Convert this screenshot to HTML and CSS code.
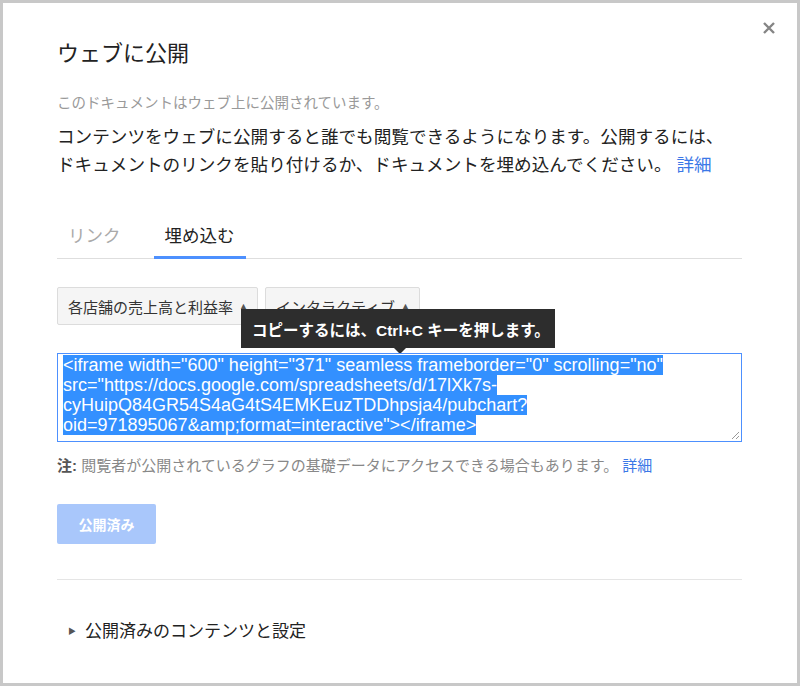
FILE: index.html
```
<!DOCTYPE html>
<html lang="ja">
<head>
    <meta charset="UTF-8">
    <meta name="viewport" content="width=device-width, initial-scale=1.0">
    <title>ウェブに公開</title>
    <link rel="stylesheet" href="styles.css">
</head>
<body>
    <div class="dialog">
        <button class="close" aria-label="閉じる">
            <svg width="14" height="14" viewBox="0 0 14 14">
                <path d="M2 2L12 12M12 2L2 12" stroke="#858585" stroke-width="2.4" fill="none"/>
            </svg>
        </button>

        <h1 class="title">ウェブに公開</h1>
        <p class="status">このドキュメントはウェブ上に公開されています。</p>
        <p class="intro">
            コンテンツをウェブに公開すると誰でも閲覧できるようになります。公開するには、<br>
            ドキュメントのリンクを貼り付けるか、ドキュメントを埋め込んでください。 <a href="#">詳細</a>
        </p>

        <div class="tabs">
            <div class="tab">リンク</div>
            <div class="tab active">埋め込む</div>
        </div>

        <div class="selects">
            <div class="select select-chart">各店舗の売上高と利益率 <span class="arrow">▲</span></div>
            <div class="select select-mode">インタラクティブ <span class="arrow">▲</span></div>
            <div class="tooltip">コピーするには、Ctrl+C キーを押します。</div>
        </div>

        <div class="code">
            <span class="selected">&lt;iframe width="600" height="371" seamless frameborder="0" scrolling="no" <br>src="https://docs.google.com/spreadsheets/d/17lXk7s-<br>cyHuipQ84GR54S4aG4tS4EMKEuzTDDhpsja4/pubchart?<br>oid=971895067&amp;amp;format=interactive"&gt;&lt;/iframe&gt;</span>
            <svg class="grip" width="9" height="9" viewBox="0 0 9 9">
                <path d="M8 1L1 8M8 5L5 8" stroke="#999" stroke-width="1" fill="none"/>
            </svg>
        </div>

        <p class="note"><b>注:</b> 閲覧者が公開されているグラフの基礎データにアクセスできる場合もあります。 <a href="#">詳細</a></p>

        <button class="publish" disabled>公開済み</button>

        <div class="divider"></div>

        <div class="expander"><span class="caret">▶</span>公開済みのコンテンツと設定</div>
    </div>
</body>
</html>
```

FILE: styles.css
```
body {
    margin: 0;
    padding: 0;
    background: #fff;
    font-family: 'Liberation Sans', 'Noto Sans CJK JP', sans-serif;
    color: #222;
}

.dialog {
    position: relative;
    width: 800px;
    height: 686px;
    box-sizing: border-box;
    border: 3px solid #c8c8c8;
    background: #fff;
    padding: 36px 55px 0 54px;
}

.close {
    position: absolute;
    top: 18px;
    right: 21px;
    padding: 0;
    border: none;
    background: none;
    cursor: pointer;
}

.title {
    margin: 0;
    font-size: 22px;
    font-weight: normal;
    line-height: 30px;
    color: #222;
}

.status {
    margin: 24px 0 0;
    font-size: 14.5px;
    line-height: 20px;
    color: #999;
}

.intro {
    margin: 10px 0 0;
    font-size: 17.6px;
    line-height: 28px;
    color: #222;
    white-space: nowrap;
}

a {
    color: #3b78e7;
    text-decoration: none;
}

.tabs {
    display: flex;
    gap: 22px;
    margin-top: 35px;
    border-bottom: 1px solid #dedede;
}

.tab {
    padding: 10px 11px 8px;
    font-size: 17.5px;
    line-height: 24px;
    color: #aaa;
    border-bottom: 3px solid transparent;
    margin-bottom: -1px;
}

.tab.active {
    color: #222;
    border-bottom-color: #4d90fe;
}

.selects {
    position: relative;
    display: flex;
    gap: 7px;
    margin-top: 28px;
}

.select {
    height: 38px;
    box-sizing: border-box;
    padding: 0 9px 0 10px;
    display: flex;
    align-items: center;
    justify-content: space-between;
    background: #f5f5f5;
    border: 1px solid #dcdcdc;
    border-radius: 2px;
    font-size: 15px;
    color: #333;
    white-space: nowrap;
    overflow: hidden;
}

.select-chart {
    width: 201px;
}

.select-mode {
    width: 155px;
}

.arrow {
    font-size: 9px;
    color: #555;
}

.tooltip {
    position: absolute;
    left: 184px;
    top: 22px;
    width: 314px;
    height: 39px;
    box-sizing: border-box;
    padding-left: 11px;
    display: flex;
    align-items: center;
    background: #2d2d2d;
    color: #fff;
    font-size: 15.5px;
    font-weight: bold;
    white-space: nowrap;
}

.tooltip::after {
    content: '';
    position: absolute;
    left: 153px;
    bottom: -6px;
    border-left: 6px solid transparent;
    border-right: 6px solid transparent;
    border-top: 6px solid #2d2d2d;
}

.code {
    position: relative;
    margin-top: 28px;
    height: 89px;
    box-sizing: border-box;
    border: 1px solid #4d90fe;
    padding: 1px 5px;
    font-family: 'Liberation Sans', Arial, sans-serif;
    font-size: 18px;
    line-height: 20px;
    white-space: nowrap;
}

.selected {
    background: #3390ff;
    color: #fff;
}

.grip {
    position: absolute;
    right: 1px;
    bottom: 1px;
}

.note {
    margin: 14px 0 0;
    font-size: 15px;
    line-height: 20px;
    color: #888;
    white-space: nowrap;
}

.note b {
    color: #555;
}

.publish {
    display: block;
    margin-top: 28px;
    width: 99px;
    height: 40px;
    border: none;
    border-radius: 2px;
    background: #a9c7fb;
    color: #fff;
    font-family: inherit;
    font-size: 14px;
    font-weight: bold;
}

.divider {
    margin-top: 35px;
    height: 1px;
    background: #e5e5e5;
}

.expander {
    margin-top: 40px;
    padding-left: 11px;
    font-size: 17px;
    line-height: 24px;
    color: #222;
    display: flex;
    align-items: center;
}

.caret {
    font-size: 8px;
    color: #555;
    margin-right: 9px;
}
```
